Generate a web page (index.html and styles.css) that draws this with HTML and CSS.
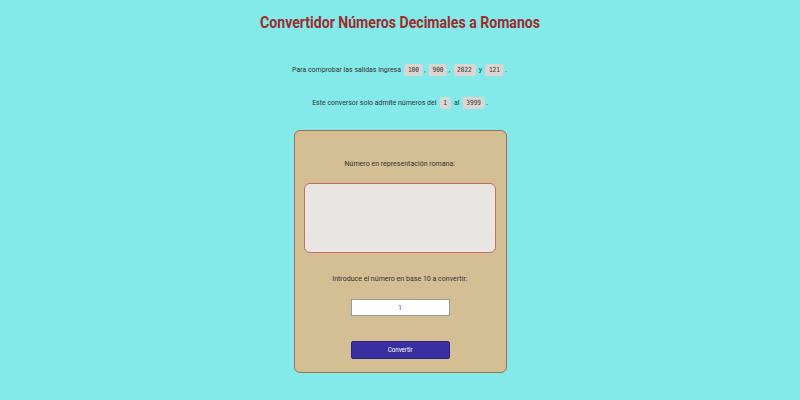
FILE: index.html
```html
<!DOCTYPE html>
<html lang="es">
<head>
<meta charset="utf-8">
<title>Convertidor</title>
<link rel="stylesheet" href="styles.css">
</head>
<body>
<main class="page">
  <h1 class="title">Convertidor Números Decimales a Romanos</h1>
  <p class="note">Para comprobar las salidas ingresa <code>100</code>, <code>900</code>, <code>2022</code> y <code>121</code>.</p>
  <p class="note">Este conversor solo admite números del <code>1</code> al <code>3999</code>.</p>
  <section class="card">
    <p class="label">Número en representación romana:</p>
    <textarea class="output" readonly></textarea>
    <p class="label label-2">Introduce el número en base 10 a convertir:</p>
    <input class="num" type="text" value="1">
    <button class="btn"><span class="btn-text">Convertir</span></button>
  </section>
</main>
</body>
</html>
```
FILE: styles.css
```css
html, body { margin: 0; padding: 0; }
body {
  background: #84e9e9;
  font-family: Roboto, "Liberation Sans", sans-serif;
  color: #333;
  height: 400px;
}
.page {
  display: flex;
  flex-direction: column;
  align-items: center;
}
.title, .note, .label, .btn-text {
  transform: scaleX(0.88);
}
.title {
  margin: 13px 0 0;
  font-size: 16px;
  line-height: 20px;
  font-weight: 700;
  color: #9b2d2d;
}
.note {
  margin: 32px 0 0;
  font-size: 8px;
  line-height: 10px;
  transform: scaleX(0.87);
}
.note + .note { margin-top: 23px; }
code {
  font-family: "DejaVu Sans Mono", monospace;
  font-size: 7px;
  background: #dcd6d3;
  padding: 2px 4px;
  border-radius: 2px;
  margin: 0 2px;
  color: #333;
}
.card {
  margin-top: 22px;
  width: 211px;
  background: #d4bf94;
  border: 1px solid #a07055;
  border-radius: 6px;
  display: flex;
  flex-direction: column;
  align-items: center;
  padding: 0 0 13px;
}
.label { margin: 28px 0 0; font-size: 8px; line-height: 10px; color: #333; }
.output {
  margin-top: 14px;
  width: 192px;
  height: 70px;
  box-sizing: border-box;
  background: #e9e5e3;
  border: 1px solid #c96b5b;
  border-radius: 6px;
  resize: none;
}
.label-2 { margin-top: 21px; }
.num {
  margin-top: 15px;
  width: 99px;
  height: 17px;
  box-sizing: border-box;
  border: 1px solid #999;
  text-align: center;
  font-family: Roboto, sans-serif;
  font-size: 8px;
  color: #666;
  padding: 0;
}
.btn {
  margin-top: 25px;
  width: 99px;
  height: 18px;
  background: #3a2fa0;
  color: #fff;
  border: 1px solid #2a2080;
  border-radius: 2px;
  font-family: Roboto, sans-serif;
  font-size: 7px;
  padding: 0;
}
.btn-text { display: inline-block; }
```
